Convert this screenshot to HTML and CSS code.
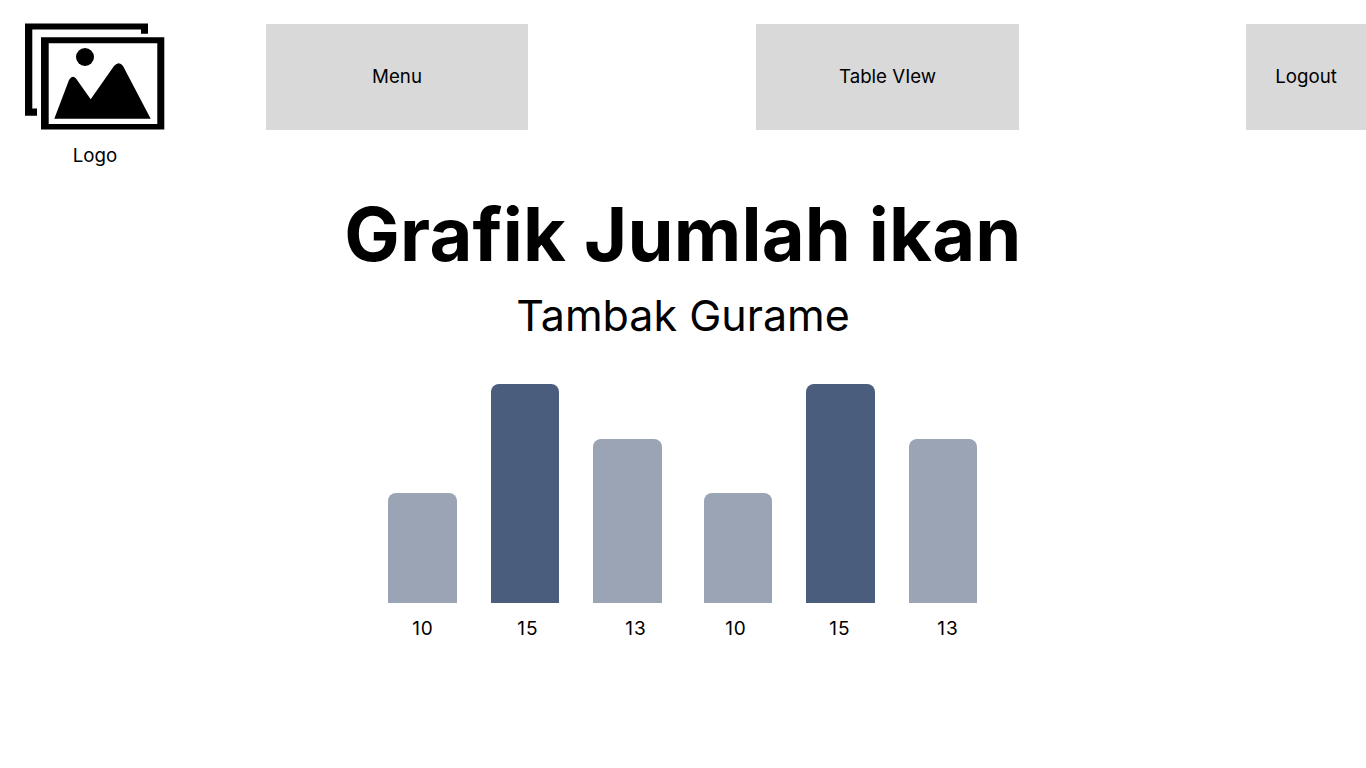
FILE: index.html
```html
<!DOCTYPE html>
<html lang="en">
<head>
    <meta charset="UTF-8">
    <meta name="viewport" content="width=device-width, initial-scale=1.0">
    <title>Grafik Jumlah ikan</title>
    <link rel="stylesheet" href="styles.css">
</head>
<body>
    <header>
        <div class="logo">
            <svg width="140" height="107" viewBox="25 23 140 107">
                <path d="M25 23.5H148V33.7H141V29.5H32.3V108.5H37V115.7H25Z"/>
                <path fill-rule="evenodd" d="M41 37.3H164.3V129.5H41ZM48.7 43.3V124H157.3V43.3Z"/>
                <circle cx="85" cy="57" r="9"/>
                <path d="M54.3 118.7L69 80Q72.5 74.5 76 78.5L90.7 99.3L114 66Q119 60.5 123 66L150.7 118.7Z"/>
            </svg>
            <span>Logo</span>
        </div>
        <nav>
            <a class="nav-btn menu" href="#">Menu</a>
            <a class="nav-btn table" href="#">Table VIew</a>
            <a class="nav-btn logout" href="#">Logout</a>
        </nav>
    </header>
    <main>
        <h1>Grafik Jumlah ikan</h1>
        <h2>Tambak Gurame</h2>
        <div class="chart">
            <div class="bar-group">
                <div class="bar low"></div>
                <div class="bar high"></div>
                <div class="bar mid"></div>
            </div>
            <div class="bar-group">
                <div class="bar low"></div>
                <div class="bar high"></div>
                <div class="bar mid"></div>
            </div>
        </div>
        <div class="labels">
            <span>10</span>
            <span>15</span>
            <span>13</span>
            <span>10</span>
            <span>15</span>
            <span>13</span>
        </div>
    </main>
</body>
</html>
```

FILE: styles.css
```css
body {
    font-family: Inter, Arial, sans-serif;
    margin: 0;
    height: 768px;
    overflow: hidden;
    background-color: white;
    color: #000;
}
header {
    display: flex;
    align-items: flex-start;
    padding: 23px 0 0 25px;
}
.logo {
    width: 140px;
    display: flex;
    flex-direction: column;
    align-items: center;
    font-size: 18.7px;
}
.logo svg {
    display: block;
    margin-bottom: 13px;
}
.logo span {
    line-height: 25px;
}
nav {
    display: flex;
    margin: 1px 0 0 101px;
    flex: 1;
}
.nav-btn {
    display: flex;
    align-items: center;
    justify-content: center;
    box-sizing: border-box;
    height: 106px;
    padding-bottom: 2px;
    background-color: #d9d9d9;
    color: #000;
    text-decoration: none;
    font-size: 18.7px;
}
.menu {
    width: 262px;
    margin-right: 228px;
}
.table {
    width: 263px;
    margin-right: 227px;
}
.logout {
    width: 120px;
}
main {
    display: flex;
    flex-direction: column;
    align-items: center;
}
h1 {
    margin: 20px 0 0;
    font-size: 74px;
    line-height: 92px;
    font-weight: 700;
    letter-spacing: 0.2px;
    font-variant-ligatures: none;
}
h2 {
    margin: 5px 0 0;
    font-size: 43px;
    line-height: 60px;
    font-weight: 400;
}
.chart {
    display: flex;
    align-items: flex-end;
    gap: 42px;
    height: 219px;
    margin: 39px 0.5px 0 0;
}
.bar-group {
    display: flex;
    align-items: flex-end;
    gap: 34px;
}
.bar {
    width: 68.5px;
    border-radius: 8px 8px 0 0;
    background-color: #9aa4b5;
}
.low {
    height: 110px;
}
.mid {
    height: 164px;
}
.high {
    height: 219px;
    background-color: #4a5d7c;
}
.labels {
    display: grid;
    grid-template-columns: 100px 110px 106px 94px 114px 102px;
    margin-top: 13px;
    padding-left: 6px;
    font-size: 19px;
    line-height: 26px;
    letter-spacing: 1px;
    text-align: center;
}
```
